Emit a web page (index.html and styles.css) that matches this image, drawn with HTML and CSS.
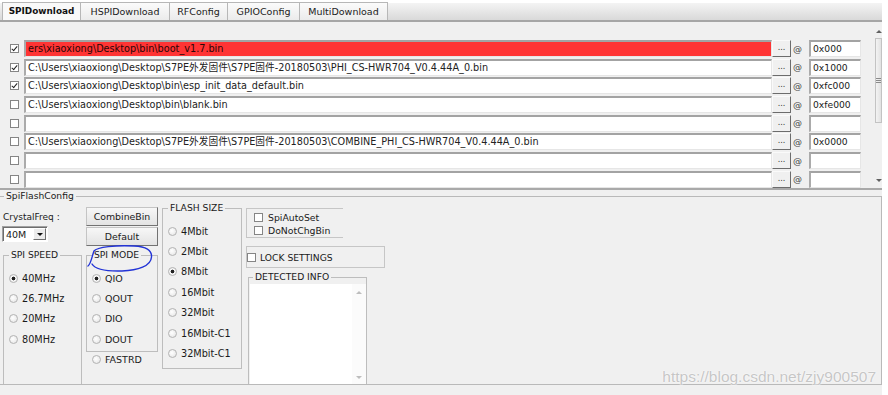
FILE: index.html
```html
<!DOCTYPE html>
<html lang="zh-CN">
<head>
    <meta charset="UTF-8">
    <meta name="viewport" content="width=device-width, initial-scale=1.0">
    <title>SPIDownload</title>
    <link rel="stylesheet" href="styles.css">
</head>
<body>
    <div class="window">
        <!-- 탭 -->
        <div class="tabbar">
            <div class="tab active t1">SPIDownload</div>
            <div class="tab t2">HSPIDownload</div>
            <div class="tab t3">RFConfig</div>
            <div class="tab t4">GPIOConfig</div>
            <div class="tab t5">MultiDownload</div>
        </div>

        <!-- 파일 목록 -->
        <div class="filelist">
            <div class="rows">
                <div class="row">
                    <span class="check on"></span>
                    <div class="path error">ers\xiaoxiong\Desktop\bin\boot_v1.7.bin</div>
                    <div class="browse">...</div>
                    <span class="at">@</span>
                    <div class="offset">0x000</div>
                </div>
                <div class="row">
                    <span class="check on"></span>
                    <div class="path">C:\Users\xiaoxiong\Desktop\S7PE外发固件\S7PE固件-20180503\PHI_CS-HWR704_V0.4.44A_0.bin</div>
                    <div class="browse">...</div>
                    <span class="at">@</span>
                    <div class="offset">0x1000</div>
                </div>
                <div class="row">
                    <span class="check on"></span>
                    <div class="path">C:\Users\xiaoxiong\Desktop\bin\esp_init_data_default.bin</div>
                    <div class="browse">...</div>
                    <span class="at">@</span>
                    <div class="offset">0xfc000</div>
                </div>
                <div class="row">
                    <span class="check"></span>
                    <div class="path">C:\Users\xiaoxiong\Desktop\bin\blank.bin</div>
                    <div class="browse">...</div>
                    <span class="at">@</span>
                    <div class="offset">0xfe000</div>
                </div>
                <div class="row">
                    <span class="check"></span>
                    <div class="path"></div>
                    <div class="browse">...</div>
                    <span class="at">@</span>
                    <div class="offset"></div>
                </div>
                <div class="row">
                    <span class="check"></span>
                    <div class="path">C:\Users\xiaoxiong\Desktop\S7PE外发固件\S7PE固件-20180503\COMBINE_PHI_CS-HWR704_V0.4.44A_0.bin</div>
                    <div class="browse">...</div>
                    <span class="at">@</span>
                    <div class="offset">0x0000</div>
                </div>
                <div class="row">
                    <span class="check"></span>
                    <div class="path"></div>
                    <div class="browse">...</div>
                    <span class="at">@</span>
                    <div class="offset"></div>
                </div>
                <div class="row">
                    <span class="check"></span>
                    <div class="path"></div>
                    <div class="browse">...</div>
                    <span class="at">@</span>
                    <div class="offset"></div>
                </div>
            </div>
            <div class="vscroll">
                <div class="sarrow"><i class="tri-up"></i></div>
                <div class="thumb"><i></i><i></i><i></i></div>
                <div class="sarrow bottom"><i class="tri-down"></i></div>
            </div>
        </div>

        <!-- SpiFlashConfig -->
        <fieldset class="flashcfg">
            <legend>SpiFlashConfig</legend>
            <div class="cfg">
                <div class="col col-crystal">
                    <div class="label">CrystalFreq :</div>
                    <div class="select">
                        <span>40M</span>
                        <span class="drop"><i class="tri-down dark"></i></span>
                    </div>
                    <fieldset class="group grow speed">
                        <legend class="caps">SPI SPEED</legend>
                        <div class="opt"><span class="radio on"></span>40MHz</div>
                        <div class="opt"><span class="radio"></span>26.7MHz</div>
                        <div class="opt"><span class="radio"></span>20MHz</div>
                        <div class="opt"><span class="radio"></span>80MHz</div>
                    </fieldset>
                </div>

                <div class="col col-mode">
                    <div class="btn">CombineBin</div>
                    <div class="btn">Default</div>
                    <fieldset class="group mode">
                        <legend class="caps">SPI MODE</legend>
                        <div class="opt caps-opt"><span class="radio on"></span>QIO</div>
                        <div class="opt caps-opt"><span class="radio"></span>QOUT</div>
                        <div class="opt caps-opt"><span class="radio"></span>DIO</div>
                        <div class="opt caps-opt"><span class="radio"></span>DOUT</div>
                    </fieldset>
                    <div class="opt caps-opt fastrd"><span class="radio"></span>FASTRD</div>
                </div>

                <div class="col col-size">
                    <fieldset class="group size">
                        <legend class="caps">FLASH SIZE</legend>
                        <div class="opt"><span class="radio"></span>4Mbit</div>
                        <div class="opt"><span class="radio"></span>2Mbit</div>
                        <div class="opt"><span class="radio on"></span>8Mbit</div>
                        <div class="opt"><span class="radio"></span>16Mbit</div>
                        <div class="opt"><span class="radio"></span>32Mbit</div>
                        <div class="opt"><span class="radio"></span>16Mbit-C1</div>
                        <div class="opt"><span class="radio"></span>32Mbit-C1</div>
                    </fieldset>
                </div>

                <div class="col col-info">
                    <div class="autoset">
                        <div class="cbrow"><span class="check"></span>SpiAutoSet</div>
                        <div class="cbrow"><span class="check"></span>DoNotChgBin</div>
                    </div>
                    <div class="lock">
                        <span class="check"></span><span class="caps">LOCK SETTINGS</span>
                    </div>
                    <fieldset class="group grow info">
                        <legend class="caps">DETECTED INFO</legend>
                        <div class="infobox">
                            <div class="infotext"></div>
                            <div class="infoscroll">
                                <i class="tri-up light"></i>
                                <i class="tri-down light"></i>
                            </div>
                        </div>
                    </fieldset>
                </div>
            </div>
        </fieldset>

        <!-- 손으로 그린 표시 -->
        <svg class="circle-mark" width="72" height="34" viewBox="0 0 72 34">
            <path d="M2 24 C5 22, 6 14, 8 9 C11 5, 30 3, 48 4 C60 4.5, 66 8, 65.5 15 C65 24, 52 28.5, 36 29 C20 29.5, 9 27, 6 22" fill="none" stroke="#2233d6" stroke-width="1.4" stroke-linecap="round"/>
        </svg>

        <div class="watermark">https://blog.csdn.net/zjy900507</div>
    </div>
</body>
</html>
```

FILE: styles.css
```css
* {
    box-sizing: border-box;
}

body {
    margin: 0;
    background-color: #fff;
    font-family: "DejaVu Sans", "Noto Sans CJK SC", sans-serif;
    font-size: 9.5px;
    color: #1a1a1a;
}

.window {
    position: relative;
    width: 882px;
    height: 395px;
    background-color: #f0f0f0;
    overflow: hidden;
}

/* 탭 */
.tabbar {
    display: flex;
    height: 22px;
    padding: 2px 0 0 2px;
    background: linear-gradient(to bottom, #fff 0, #fff 3px, #f4f4f4 3px, #d9d9d9 20px);
    border-bottom: 2px solid #a6a6a6;
}

.tab {
    height: 18px;
    line-height: 17px;
    text-align: center;
    font-size: 9.5px;
    border: 1px solid #b7b7b7;
    border-bottom: none;
    margin-right: -1px;
    background: linear-gradient(to bottom, #fbfbfb, #ebebeb);
    color: #222;
}

.tab.active {
    background: #f9f9f9;
    font-weight: bold;
    font-size: 8.9px;
    color: #111;
}

.t1 { width: 79px; }
.t2 { width: 90px; }
.t3 { width: 59px; }
.t4 { width: 73px; }
.t5 { width: 89px; }

/* 파일 목록 */
.filelist {
    display: flex;
    height: 168px;
    padding: 18px 0 0 10px;
    border-bottom: 2px solid #a9a9a9;
}

.rows {
    width: 851px;
}

.row {
    display: flex;
    align-items: center;
    height: 17px;
    margin-bottom: 1.7px;
}

.check {
    position: relative;
    flex: none;
    width: 9px;
    height: 9px;
    margin-right: 5px;
    border: 1px solid #858585;
    background-color: #fff;
}

.check.on::after {
    content: '';
    position: absolute;
    left: 2px;
    top: 0;
    width: 2px;
    height: 5px;
    border: solid #222;
    border-width: 0 1.5px 1.5px 0;
    transform: rotate(40deg);
}

.path,
.offset {
    height: 17px;
    line-height: 14px;
    padding-left: 2px;
    white-space: nowrap;
    overflow: hidden;
    background-color: #fff;
    border-style: solid;
    border-width: 2px 1px 1px 2px;
    border-color: #a3a3a3 #e6e6e6 #e6e6e6 #ababab;
}

.path {
    width: 748px;
    font-size: 9.7px;
    color: #222;
}

.path.error {
    background-color: #ff3434;
    color: #2a0606;
}

.browse {
    width: 19px;
    height: 17px;
    line-height: 13px;
    text-align: center;
    font-size: 8px;
    color: #333;
    border: 1px solid;
    border-color: #fafafa #6c6c6c #6c6c6c #fafafa;
    background-color: #f0f0f0;
}

.at {
    width: 18px;
    padding-left: 2px;
    font-size: 9px;
    color: #444;
}

.offset {
    width: 52px;
    font-size: 9.2px;
}

.vscroll {
    display: flex;
    flex-direction: column;
    align-items: center;
    width: 12px;
    margin: -16px 0 1px 14px;
}

.sarrow {
    display: flex;
    align-items: center;
    justify-content: center;
    height: 14px;
    width: 100%;
}

.sarrow.bottom {
    margin-top: auto;
}

.thumb {
    display: flex;
    flex-direction: column;
    align-items: center;
    justify-content: center;
    gap: 1px;
    width: 100%;
    height: 85px;
    border: 1px solid #c3c3c3;
    background: linear-gradient(to right, #f3f3f3, #e2e2e2);
}

.thumb i {
    display: block;
    width: 5px;
    height: 1px;
    background-color: #8a8a8a;
}

.tri-up,
.tri-down {
    display: block;
    width: 0;
    height: 0;
    border-left: 3px solid transparent;
    border-right: 3px solid transparent;
}

.tri-up {
    border-bottom: 3px solid #606060;
}

.tri-down {
    border-top: 3px solid #606060;
}

.tri-down.dark {
    border-top-color: #111;
}

.tri-up.light {
    border-bottom-color: #bdbdbd;
}

.tri-down.light {
    border-top-color: #bdbdbd;
}

/* SpiFlashConfig */
fieldset {
    margin: 0;
    min-inline-size: 0;
}

legend {
    line-height: 12px;
}

.flashcfg {
    padding: 0 0 0 2px;
    border: 1px solid #b9b9b9;
    border-left: none;
}

.flashcfg > legend {
    margin-left: 2px;
    padding: 0 2px;
    font-size: 9.2px;
}

.cfg {
    display: flex;
    gap: 4px;
    height: 182px;
    overflow: hidden;
}

.col {
    display: flex;
    flex-direction: column;
}

.caps {
    font-size: 9.2px;
}

.group {
    padding: 0 0 0 5px;
    border: 1px solid #bdbdbd;
}

.group > legend {
    padding: 0 2px;
}

.grow {
    flex: 1;
    border-bottom: none;
}

.opt {
    display: flex;
    align-items: center;
    height: 20.4px;
    white-space: nowrap;
    font-size: 9.7px;
}

.caps-opt {
    font-size: 9.5px;
}

.radio {
    flex: none;
    width: 9px;
    height: 9px;
    margin-right: 4px;
    border-radius: 50%;
    border: 1px solid #b3b3b3;
    background: radial-gradient(circle at 40% 40%, #fff, #e2e2e2);
}

.radio.on {
    background: radial-gradient(circle, #222 0, #222 1.6px, #fafafa 2.2px, #e2e2e2 100%);
}

.col-crystal {
    width: 80px;
}

.label {
    margin-top: 9px;
    padding-left: 1px;
    line-height: 12px;
    font-size: 9px;
}

.select {
    display: flex;
    align-items: stretch;
    width: 46px;
    height: 16px;
    margin-top: 3px;
    line-height: 13px;
    border: 1px solid;
    border-color: #a0a0a0 #fff #fff #a0a0a0;
    box-shadow: inset 1px 1px 0 #6d6d6d;
    background-color: #fff;
}

.select span:first-child {
    padding: 1px 0 0 3px;
}

.drop {
    display: flex;
    align-items: center;
    justify-content: center;
    width: 13px;
    margin: 1px 1px 1px auto;
    border: 1px solid;
    border-color: #fff #707070 #707070 #fff;
    background-color: #ececec;
}

.speed {
    margin: 7px 0 0 1px;
    padding-top: 7px;
}

.col-mode {
    width: 72px;
}

.btn {
    height: 19px;
    margin-top: 1px;
    line-height: 17px;
    text-align: center;
    font-size: 9.4px;
    border: 1px solid;
    border-color: #c4c4c4 #727272 #727272 #c4c4c4;
    background: linear-gradient(to bottom, #f7f7f7, #e3e3e3);
}

.btn:first-child {
    margin-top: 5px;
}

.mode {
    margin-top: 3px;
    padding-top: 7px;
    padding-bottom: 1px;
}

.fastrd {
    height: 16px;
    padding-left: 6px;
}

.col-size {
    width: 80px;
}

.size {
    padding-top: 7px;
    padding-bottom: 4px;
}

.col-info {
    width: 140px;
}

.autoset {
    width: 97px;
    height: 30px;
    margin-top: 6px;
    padding: 2px 0 0 7px;
    border: 1px solid #c6c6c6;
    border-right: none;
}

.cbrow {
    display: flex;
    align-items: center;
    height: 13px;
    font-size: 9.3px;
}

.lock {
    display: flex;
    align-items: center;
    width: 139px;
    height: 22px;
    margin-top: 8px;
    border: 1px solid #c6c6c6;
}

.lock .check {
    margin-right: 4px;
}

.info {
    width: 119px;
    margin: 3px 0 0 2px;
    padding: 0;
}

.info > legend {
    margin-left: 4px;
}

.infobox {
    display: flex;
    height: 100%;
    margin: 1px 0 0 1px;
    background-color: #fff;
}

.infotext {
    flex: 1;
}

.infoscroll {
    display: flex;
    flex-direction: column;
    justify-content: space-between;
    align-items: center;
    width: 14px;
    padding: 7px 0 6px;
    background-color: #fbfbfb;
}

/* 표시 */
.circle-mark {
    position: absolute;
    left: 86px;
    top: 242px;
}

.watermark {
    position: absolute;
    right: 6px;
    bottom: 9px;
    font-family: "Liberation Sans", Arial, sans-serif;
    font-size: 15.5px;
    line-height: 18px;
    color: #c6c6c6;
    text-shadow: 0 0 2px #fff, 0 0 1px #fff;
}
```
